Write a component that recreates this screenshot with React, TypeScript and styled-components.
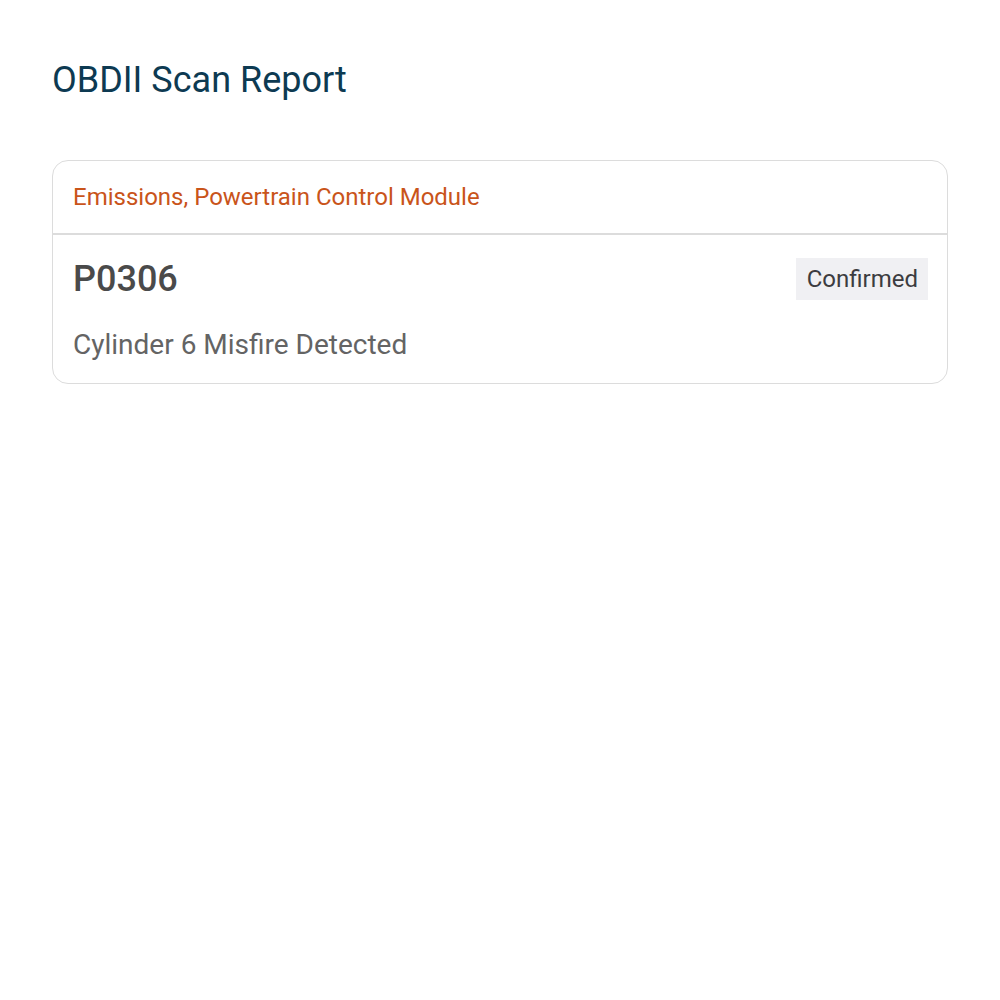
import React from "react";
import styled, { createGlobalStyle } from "styled-components";

const GlobalStyle = createGlobalStyle`
  html, body {
    margin: 0;
    padding: 0;
    background: #ffffff;
    font-family: Roboto, "Noto Sans", sans-serif;
  }
`;

const Page = styled.div`
  padding: 56px 52px;
`;

const Title = styled.h1`
  margin: 0 0 56px;
  font-size: 36px;
  font-weight: 400;
  line-height: 48px;
  color: #0d3a52;
`;

const Card = styled.section`
  border: 1px solid #dcdcdc;
  border-radius: 16px;
  overflow: hidden;
`;

const CardHeader = styled.header`
  padding: 0 20px;
  height: 72px;
  display: flex;
  align-items: center;
  border-bottom: 2px solid #dcdcdc;
  font-size: 24px;
  color: #c9541a;
`;

const CardBody = styled.div`
  padding: 23px 19px 21px 20px;
  display: flex;
  flex-direction: column;
  gap: 28px;
`;

const CodeRow = styled.div`
  display: flex;
  align-items: center;
  justify-content: space-between;
`;

const Code = styled.span`
  font-size: 36px;
  font-weight: 500;
  color: #4a4a4a;
`;

const Badge = styled.span`
  background: #f0f0f3;
  color: #3c3c40;
  font-size: 24px;
  padding: 0 10px 0 11px;
  height: 42px;
  display: flex;
  align-items: center;
`;

const Description = styled.p`
  margin: 0;
  font-size: 28px;
  line-height: 34px;
  color: #646464;
`;

export default function App() {
  return (
    <>
      <GlobalStyle />
      <Page>
        <Title>OBDII Scan Report</Title>
        <Card>
          <CardHeader>Emissions, Powertrain Control Module</CardHeader>
          <CardBody>
            <CodeRow>
              <Code>P0306</Code>
              <Badge>Confirmed</Badge>
            </CodeRow>
            <Description>Cylinder 6 Misfire Detected</Description>
          </CardBody>
        </Card>
      </Page>
    </>
  );
}
